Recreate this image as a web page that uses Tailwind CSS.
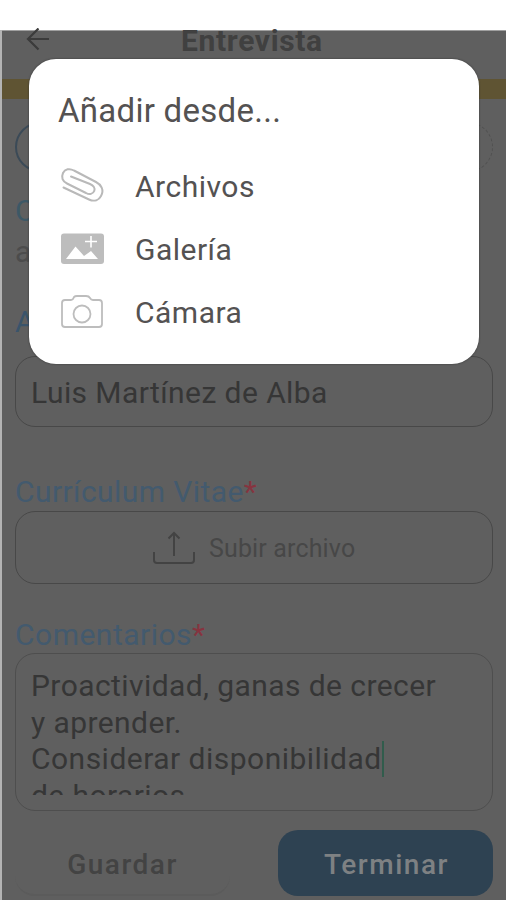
<!DOCTYPE html>
<html lang="es">
<head>
<meta charset="utf-8">
<title>Entrevista</title>
<script src="https://cdn.jsdelivr.net/npm/@tailwindcss/browser@4"></script>
</head>
<body class="bg-white">
<div class="relative w-[506px] h-[900px] overflow-hidden font-['Roboto',sans-serif] text-[30px] leading-[36px] tracking-[0.42px] text-[#363636]">
  <div class="h-[30px]"></div>
  <main class="h-[870px] border-l-2 border-[#b4b4b4] bg-[#5f5f5f] flex flex-col">
    <header class="h-[49px] shrink-0 flex items-start border-t border-[#a0a0a0] text-[#404040]">
      <svg class="w-[24px] h-[24px] ml-[24px] -mt-[3px] shrink-0" viewBox="0 0 24 24" fill="none" stroke="#3b3b3b" stroke-width="2.200"><path d="M23 11H2M12.500 .5L2 11l10.500 10.500"/></svg>
      <h1 class="ml-[131px] -mt-[8px] text-[30px] font-bold tracking-[0.650px] whitespace-nowrap"><span>Entrevista</span></h1>
    </header>
    <div class="h-[20px] shrink-0 bg-[#5f5433]"></div>
    <div class="px-[13px] flex flex-col">
      <div class="mt-[23px] h-[50px] flex justify-between">
        <div class="w-[60px] h-[50px] rounded-full border-2 border-[#3b4a57]"></div>
        <div class="w-[60px] h-[50px] rounded-full border border-dashed border-[#505050]"></div>
      </div>
      <div class="mt-[21px] h-[36px] text-[#3d5866]">Candidato</div>
      <div class="mt-[5px] h-[36px] text-[#4c4c4c]">aspirante</div>
      <div class="mt-[34px] h-[36px] text-[#3a546b]">Aspirante</div>
      <div class="mt-[16px] h-[71px] rounded-[20px] border-[1.500px] border-[#484848] px-[15px] pt-[2px] flex items-center"><span class="whitespace-nowrap">Luis Martínez de Alba</span></div>
      <div class="mt-[46px] h-[38px] leading-[38px] text-[#435a6e] whitespace-nowrap"><span>Currículum Vitae</span><span class="text-[#86343f]">*</span></div>
      <div class="h-[73px] rounded-[20px] border-[1.500px] border-[#484848] flex items-center pl-[137px] pt-[2px]">
        <svg class="w-[42px] h-[35px] shrink-0" viewBox="0 0 42 35" fill="none" stroke="#434343" stroke-width="2"><path d="M1 21v8q0 3 3 3h34q3 0 3-3v-8M21 25V2M15.500 7.500L21 2l5.500 5.500"/></svg>
        <span class="ml-[14px] mt-[1px] text-[25px] tracking-[0.150px] text-[#474747] whitespace-nowrap">Subir archivo</span>
      </div>
      <div class="mt-[32px] h-[37px] leading-[37px] tracking-[0.500px] text-[#435a6e] whitespace-nowrap"><span>Comentarios</span><span class="text-[#86343f]">*</span></div>
      <div class="h-[158px] rounded-[20px] border-[1.500px] border-[#4e4e4e] px-[15px] pt-[14px]">
        <div class="h-[127px] overflow-hidden leading-[36.500px] whitespace-nowrap">
          <div><span>Proactividad, ganas de crecer</span></div>
          <div><span>y aprender.</span></div>
          <div class="flex"><span class="tracking-[0.480px]">Considerar disponibilidad</span><i class="w-[2px] h-[36px] bg-[#315c4c]"></i></div>
          <div><span>de horarios</span></div>
        </div>
      </div>
      <div class="mt-[19px] flex justify-between font-medium text-[28px]">
        <div class="w-[215px] h-[66px] rounded-[20px] border-b-2 border-[#5b5b5b] text-[#434343] flex items-center justify-center pt-[5px]"><span class="tracking-[1.500px]">Guardar</span></div>
        <div class="w-[215px] h-[66px] rounded-[20px] bg-[#2e4252] text-[#7e8183] flex items-center justify-center pt-[3px]"><span class="tracking-[1.500px] ml-[2px]">Terminar</span></div>
      </div>
    </div>
  </main>
  <section class="absolute left-[29px] top-[59px] w-[450px] h-[305px] rounded-[27px] bg-white shadow-[0_0_2px_0px_#303030] pl-[29px] pt-[32px] text-[#545252] whitespace-nowrap">
    <h2 class="h-[40px] leading-[40px] text-[33px] tracking-[0.270px]"><span>Añadir desde...</span></h2>
    <ul class="mt-[24px] text-[30px] tracking-[0.5px]">
      <li class="h-[63px] flex items-center">
        <svg class="w-[48px] h-[40px] mr-[29px] -mt-[6px]" viewBox="0 0 48 40" fill="none" stroke="#b9b9b9" stroke-width="2" stroke-linecap="round"><path d="M5.500 23.500L31 35.500C36.500 38 41 36 43 32C46.500 26 43 20.500 38 18L16 6.500C11.500 4 7 5 5 9C3 13.500 4.500 17.500 9 19.500L28 29C31.500 31 35 30 36.200 27C37.500 24 35.500 21.500 32 20L13 12.500"/></svg>
        <span>Archivos</span>
      </li>
      <li class="h-[63px] flex items-center">
        <svg class="w-[48px] h-[40px] mr-[29px] -mt-[4px]" viewBox="0 0 48 40"><rect x="3" y="5.500" width="43" height="30.500" rx="3" fill="#bdbdbd"/><path d="M8 31L17.500 18.500L26 28L33 23L40 31Z" fill="#fff"/><path d="M27 13.500H39M33 8V19.500" stroke="#fff" stroke-width="1.600"/></svg>
        <span class="mt-[1px]">Galería</span>
      </li>
      <li class="h-[63px] flex items-center">
        <svg class="w-[48px] h-[40px] mr-[29px] -mt-[4px]" viewBox="0 0 48 40" fill="none" stroke="#bdbdbd" stroke-width="1.800"><path d="M7 9H13Q15 9 15.500 7L16 6Q17 5 19 5H28Q31 5 32 7Q33 9 35 9H41Q44 9 44 12V33Q44 36 41 36H7Q4 36 4 33V12Q4 9 7 9Z"/><circle cx="24" cy="23" r="8.500"/></svg>
        <span class="mt-[1px]">Cámara</span>
      </li>
    </ul>
  </section>
</div>
</body>
</html>
